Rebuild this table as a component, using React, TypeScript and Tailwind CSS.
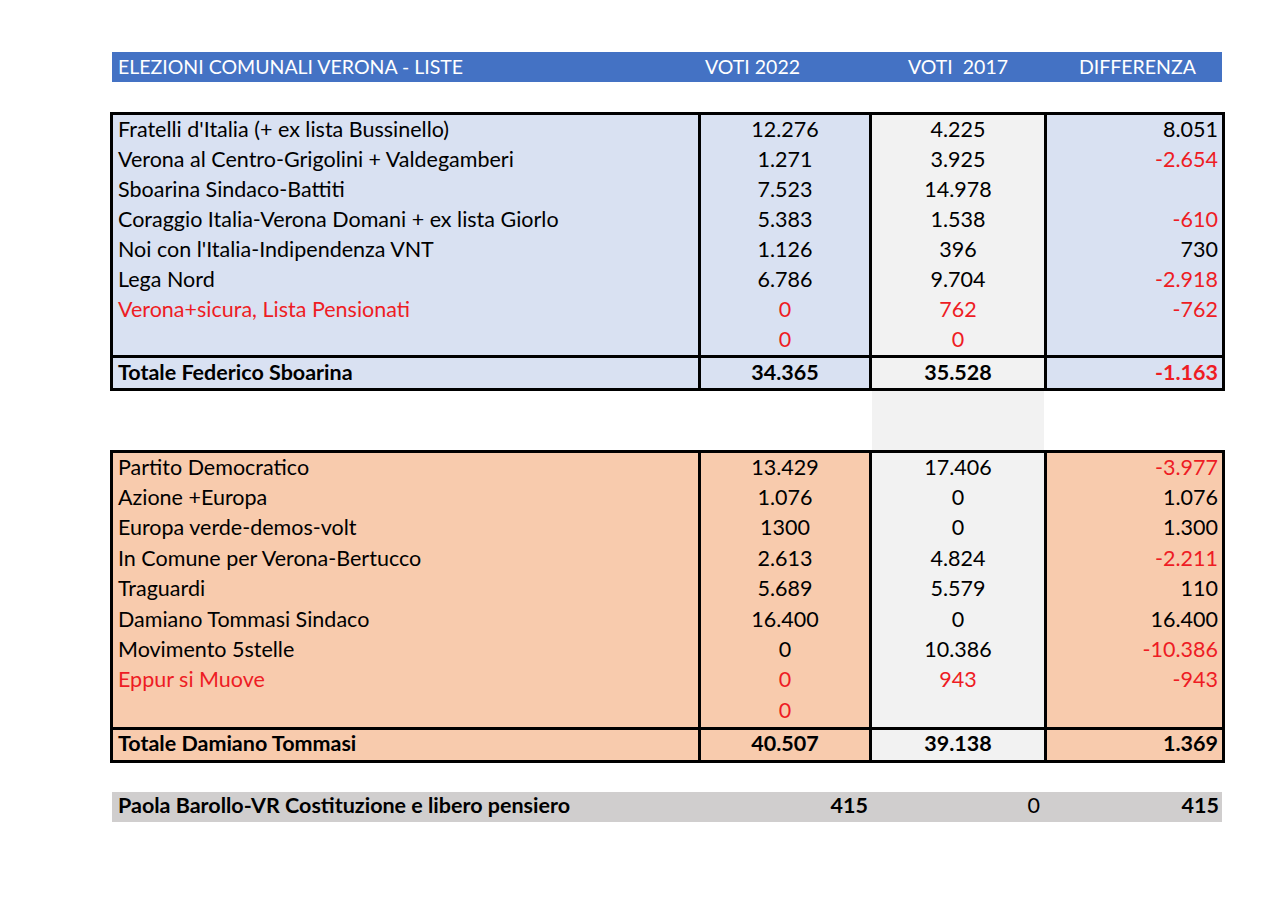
import React from "react";

type Row = {
  name: string;
  a: string;
  b: string;
  d: string;
  nameRed?: boolean;
  aRed?: boolean;
  bRed?: boolean;
  dRed?: boolean;
};

const t1: Row[] = [
  { name: "Fratelli d'Italia (+ ex lista Bussinello)", a: "12.276", b: "4.225", d: "8.051" },
  { name: "Verona al Centro-Grigolini + Valdegamberi", a: "1.271", b: "3.925", d: "-2.654", dRed: true },
  { name: "Sboarina Sindaco-Battiti", a: "7.523", b: "14.978", d: "" },
  { name: "Coraggio Italia-Verona Domani + ex lista Giorlo", a: "5.383", b: "1.538", d: "-610", dRed: true },
  { name: "Noi con l'Italia-Indipendenza VNT", a: "1.126", b: "396", d: "730" },
  { name: "Lega Nord", a: "6.786", b: "9.704", d: "-2.918", dRed: true },
  { name: "Verona+sicura, Lista Pensionati", a: "0", b: "762", d: "-762", nameRed: true, aRed: true, bRed: true, dRed: true },
  { name: "", a: "0", b: "0", d: "", aRed: true, bRed: true },
];

const t2: Row[] = [
  { name: "Partito Democratico", a: "13.429", b: "17.406", d: "-3.977", dRed: true },
  { name: "Azione +Europa", a: "1.076", b: "0", d: "1.076" },
  { name: "Europa verde-demos-volt", a: "1300", b: "0", d: "1.300" },
  { name: "In Comune per Verona-Bertucco", a: "2.613", b: "4.824", d: "-2.211", dRed: true },
  { name: "Traguardi", a: "5.689", b: "5.579", d: "110" },
  { name: "Damiano Tommasi Sindaco", a: "16.400", b: "0", d: "16.400" },
  { name: "Movimento 5stelle", a: "0", b: "10.386", d: "-10.386", dRed: true },
  { name: "Eppur si Muove", a: "0", b: "943", d: "-943", nameRed: true, aRed: true, bRed: true, dRed: true },
  { name: "", a: "0", b: "", d: "", aRed: true },
];

const RED = "text-[#ee1c24]";

function DataRow({ r, bg, bold, top, h }: { r: Row; bg: string; bold?: boolean; top?: boolean; h: string }) {
  const topB = top ? "border-t-[3px] border-black h-[33px]" : h;
  const w = bold ? "font-bold" : "";
  return (
    <div className={`grid grid-cols-[585px_171px_175px_178px] grid-rows-[100%] leading-[22px] ${topB} ${w}`}>
      <div className={`${bg} flex items-center pl-[5px] pb-[3px] whitespace-nowrap ${r.nameRed ? RED : "text-black"}`}>{r.name}</div>
      <div className={`${bg} border-l-[3px] border-black flex items-center justify-center pb-[3px] ${r.aRed ? RED : "text-black"}`}>{r.a}</div>
      <div className={`bg-[#f2f2f2] border-l-[3px] border-black flex items-center justify-center pb-[3px] ${r.bRed ? RED : "text-black"}`}>{r.b}</div>
      <div className={`${bg} border-l-[3px] border-black flex items-center justify-end pr-[4px] pb-[3px] ${r.dRed ? RED : "text-black"}`}>{r.d}</div>
    </div>
  );
}

function Table({ rows, total, bg, h }: { rows: Row[]; total: Row; bg: string; h: string }) {
  return (
    <div className="w-[1115px] border-[3px] border-black">
      {rows.map((r, i) => (
        <DataRow key={i} r={r} bg={bg} h={h} />
      ))}
      <DataRow r={total} bg={bg} bold top h={h} />
    </div>
  );
}

export default function App() {
  return (
    <div
      className="w-[1279px] h-[910px] bg-white pt-[52px] text-[21.5px] text-black"
      style={{ fontFamily: "Lato, 'Open Sans', sans-serif" }}
    >
      <div className="ml-[112px] w-[1110px] h-[30px] bg-[#4472c4] text-white text-[19.5px] leading-[22px] grid grid-cols-[589px_171px_175px_175px] items-center">
        <div className="pl-[6px] whitespace-nowrap">ELEZIONI COMUNALI VERONA - LISTE</div>
        <div className="pl-[4px] whitespace-nowrap">VOTI 2022</div>
        <div className="pl-[36px] whitespace-pre">VOTI  2017</div>
        <div className="pl-[32px] whitespace-nowrap">DIFFERENZA</div>
      </div>

      <div className="ml-[110px] mt-[30px]">
        <Table
          rows={t1}
          bg="bg-[#d9e1f2]"
          h="h-[30px]"
          total={{ name: "Totale Federico Sboarina", a: "34.365", b: "35.528", d: "-1.163", dRed: true }}
        />
      </div>

      <div className="ml-[113px] h-[59px] grid grid-cols-[585px_171px_175px_178px]">
        <div />
        <div />
        <div className="ml-[3px] bg-[#f2f2f2]" />
        <div />
      </div>

      <div className="ml-[110px]">
        <Table
          rows={t2}
          bg="bg-[#f8cbad]"
          h="h-[30.4px]"
          total={{ name: "Totale Damiano Tommasi", a: "40.507", b: "39.138", d: "1.369" }}
        />
      </div>

      <div className="ml-[112px] mt-[29px] w-[1110px] h-[30px] pb-[3px] leading-[22px] bg-[#d0cece] font-bold grid grid-cols-[586px_171px_175px_178px] items-center">
        <div className="pl-[6px] whitespace-nowrap">Paola Barollo-VR Costituzione e libero pensiero</div>
        <div className="text-right pr-[1px]">415</div>
        <div className="text-right pr-[4px] font-normal">0</div>
        <div className="text-right pr-[3px]">415</div>
      </div>
    </div>
  );
}
